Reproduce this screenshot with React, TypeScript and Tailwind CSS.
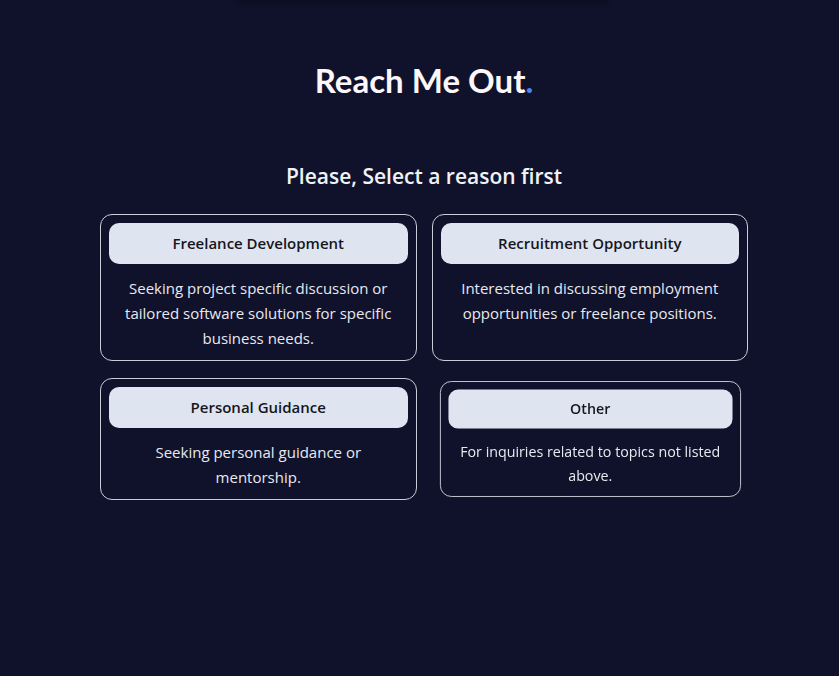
import React from "react";

const cards = [
  { title: "Freelance Development", desc: "Seeking project specific discussion or tailored software solutions for specific business needs." },
  { title: "Recruitment Opportunity", desc: "Interested in discussing employment opportunities or freelance positions." },
  { title: "Personal Guidance", desc: "Seeking personal guidance or mentorship." },
  { title: "Other", desc: "For inquiries related to topics not listed above.", hover: true },
];

export default function App() {
  return (
    <div className="relative min-h-screen bg-[#10122c] font-['Open_Sans',sans-serif]">
      <div className="absolute left-[235px] top-[-6px] h-[10px] w-[375px] rounded-b-[8px] bg-[#0c0d1f] opacity-70 blur-[2px]" />
      <div className="flex flex-col items-center pl-[9px] pt-[58px]">
        <h1 className="font-['Lato',sans-serif] text-[33px] font-bold leading-[44px] text-[#fdf7fa]">
          Reach Me Out<span className="text-[#4b84f5]">.</span>
        </h1>
        <h2 className="mt-[58px] text-[21px] font-semibold leading-[32px] text-[#f1f2f6]">
          Please, Select a reason first
        </h2>
        <div className="mt-[22px] grid w-[648px] grid-cols-2 gap-x-[15px] gap-y-[17px]">
          {cards.map((c) => (
            <div
              key={c.title}
              className={
                "flex flex-col rounded-[12px] border border-[#c9cdd8] px-2 pt-2 pb-[9px] " +
                (c.hover ? "scale-95" : "")
              }
            >
              <div className="flex h-[41px] items-center justify-center rounded-[10px] bg-[#dfe5f0] text-[15px] font-semibold text-[#16161d]">
                {c.title}
              </div>
              <p className="mt-3 px-[12px] text-center text-[15px] leading-[25px] text-[#e8e9ef]">
                {c.desc}
              </p>
            </div>
          ))}
        </div>
      </div>
    </div>
  );
}
